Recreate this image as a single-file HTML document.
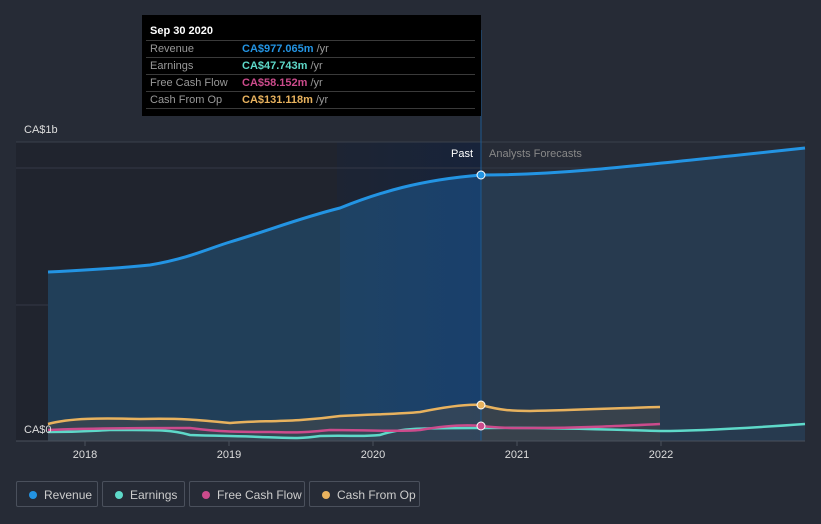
<!DOCTYPE html>
<html><head><meta charset="utf-8"><style>
body{margin:0;background:#262b36;width:821px;height:524px;overflow:hidden;font-family:"Liberation Sans",sans-serif;}
.tt{position:absolute;left:142px;top:15px;width:339px;height:101px;background:#000;}
.tt .h{position:absolute;left:8px;top:10px;color:#fff;font-weight:bold;font-size:11px;}
.row{position:absolute;left:4px;width:329px;height:16px;border-top:1px solid #3a3a3a;font-size:11px;color:#999;line-height:16px}
.row span.l{position:absolute;left:4px}
.row span.v{position:absolute;left:96px;font-weight:bold}
.row span.u{color:#999;font-weight:normal}
.leg{position:absolute;top:481px;height:26px;border:1px solid #4a505c;border-radius:2px;color:#ccc;font-size:12px;line-height:26px;box-sizing:border-box}
.leg i{position:absolute;left:12px;top:9px;width:8px;height:8px;border-radius:50%}
.leg span{position:absolute;left:27px}
</style></head><body>
<svg width="821" height="524" style="position:absolute;left:0;top:0">
<defs>
<linearGradient id="hl" x1="0" y1="0" x2="1" y2="0"><stop offset="0" stop-color="#1d2433"/><stop offset="1" stop-color="#17233a"/></linearGradient>
<linearGradient id="hf" x1="0" y1="0" x2="1" y2="0"><stop offset="0" stop-color="#1f4263"/><stop offset="1" stop-color="#19406c"/></linearGradient>
</defs>
<rect x="16" y="142" width="321" height="299" fill="#20242e"/>
<rect x="337" y="142" width="144" height="299" fill="url(#hl)"/>
<line x1="16" y1="142" x2="805" y2="142" stroke="#3a404c"/>
<line x1="16" y1="168" x2="805" y2="168" stroke="#333947"/>
<line x1="16" y1="305" x2="805" y2="305" stroke="#333947"/>
<path d="M48,272 C90,270 120,268 150,265 C190,258 210,248 230,242 C270,230 300,218 340,208 L340,441 L48,441Z" fill="#213f59"/>
<path d="M340,208 C380,192 420,180 481,175 L481,441 L340,441Z" fill="url(#hf)"/>
<path d="M481,175 C550,175 600,170 805,148 L805,441 L481,441Z" fill="#273a4f"/>
<path d="M48,424 C70,418 100,418 140,419 C180,418 200,420 230,423 C260,420 290,423 340,416 C380,414 400,414 420,412 C450,406 470,404 481,405 C500,410 510,411 530,411 C580,410 620,408 660,407 L660,441 L48,441Z" fill="#4a4a4a" opacity="0.5"/>
<path d="M48,272 C90,270 120,268 150,265 C190,258 210,248 230,242 C270,230 300,218 340,208 C380,192 420,180 481,175 C550,175 600,170 805,148" fill="none" stroke="#2394e3" stroke-width="3"/>
<path d="M48,432 C80,432 90,431 110,430 C150,430 170,429 190,435 C220,436 240,436 260,437 C290,438 300,439 320,436 C350,435 360,437 380,435 C400,428 420,428 481,428 C550,427 620,430 660,431 C700,431 750,428 805,424" fill="none" stroke="#5ed9c9" stroke-width="2.5"/>
<path d="M48,430 C90,428 150,428 190,428 C220,432 240,432 270,432 C300,433 310,432 330,430 C370,430 400,432 420,430 C450,425 470,425 481,426 C500,428 510,428 530,428 C580,428 620,426 660,424" fill="none" stroke="#cc4b8c" stroke-width="2.5"/>
<path d="M48,424 C70,418 100,418 140,419 C180,418 200,420 230,423 C260,420 290,423 340,416 C380,414 400,414 420,412 C450,406 470,404 481,405 C500,410 510,411 530,411 C580,410 620,408 660,407" fill="none" stroke="#e8b25e" stroke-width="2.5"/>
<line x1="481" y1="30" x2="481" y2="441" stroke="#1e5a90" stroke-width="1"/>
<circle cx="481" cy="175" r="4" fill="#2394e3" stroke="#fff" stroke-width="1"/>
<circle cx="481" cy="405" r="4" fill="#e8b25e" stroke="#fff" stroke-width="1"/>
<circle cx="481" cy="426" r="4" fill="#cc4b8c" stroke="#fff" stroke-width="1"/>
<line x1="16" y1="441" x2="805" y2="441" stroke="#4a505c"/>
<g stroke="#4a505c"><line x1="85" y1="441" x2="85" y2="446"/><line x1="229" y1="441" x2="229" y2="446"/><line x1="373" y1="441" x2="373" y2="446"/><line x1="517" y1="441" x2="517" y2="446"/><line x1="661" y1="441" x2="661" y2="446"/></g>
<g fill="#ddd" font-size="11" text-anchor="middle" font-family="Liberation Sans"><text x="85" y="458">2018</text><text x="229" y="458">2019</text><text x="373" y="458">2020</text><text x="517" y="458">2021</text><text x="661" y="458">2022</text></g>
<text x="24" y="133" fill="#ddd" font-size="11" font-family="Liberation Sans">CA$1b</text>
<text x="24" y="433" fill="#ddd" font-size="11" font-family="Liberation Sans">CA$0</text>
<text x="473" y="157" fill="#fff" font-size="11" text-anchor="end" font-family="Liberation Sans">Past</text>
<text x="489" y="157" fill="#888" font-size="11" font-family="Liberation Sans">Analysts Forecasts</text>
</svg>
<div class="tt"><div class="h">Sep 30 2020</div>
<div class="row" style="top:25px"><span class="l">Revenue</span><span class="v" style="color:#2394e3">CA$977.065m <span class="u">/yr</span></span></div>
<div class="row" style="top:42px"><span class="l">Earnings</span><span class="v" style="color:#5ed9c9">CA$47.743m <span class="u">/yr</span></span></div>
<div class="row" style="top:59px"><span class="l">Free Cash Flow</span><span class="v" style="color:#cc4b8c">CA$58.152m <span class="u">/yr</span></span></div>
<div class="row" style="top:76px"><span class="l">Cash From Op</span><span class="v" style="color:#e8b25e">CA$131.118m <span class="u">/yr</span></span></div>
<div class="row" style="top:93px;height:0"></div>
</div>
<div class="leg" style="left:16px;width:82px"><i style="background:#2394e3"></i><span>Revenue</span></div>
<div class="leg" style="left:102px;width:83px"><i style="background:#5ed9c9"></i><span>Earnings</span></div>
<div class="leg" style="left:189px;width:116px"><i style="background:#cc4b8c"></i><span>Free Cash Flow</span></div>
<div class="leg" style="left:309px;width:111px"><i style="background:#e8b25e"></i><span>Cash From Op</span></div>
</body></html>
